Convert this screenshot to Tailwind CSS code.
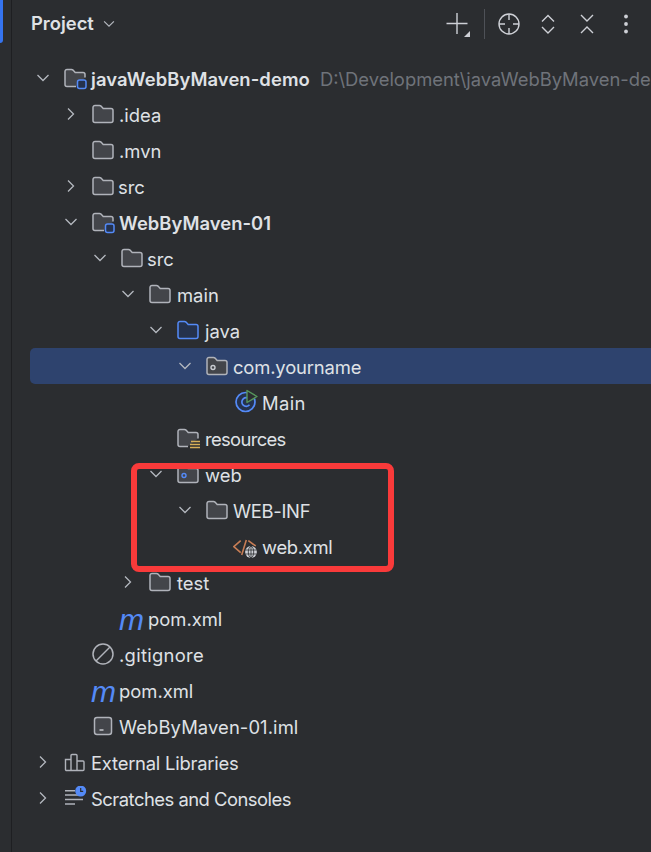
<!DOCTYPE html>
<html lang="en">
<head>
<meta charset="UTF-8">
<title>Project</title>
<script src="https://cdn.jsdelivr.net/npm/@tailwindcss/browser@4"></script>
</head>
<body class="bg-[#2b2d30] font-['Inter','Noto_Sans',sans-serif] text-[18.4px] text-[#dfe1e5] overflow-hidden">

<svg class="hidden">
  <defs>
    <symbol id="chev-down" viewBox="0 0 18 18"><path d="M3.5 6l5.5 5.5L14.500 6" fill="none" stroke="#b4b8bf" stroke-width="1.300"/></symbol>
    <symbol id="chev-right" viewBox="0 0 18 18"><path d="M6 3.500L11.500 9 6 14.500" fill="none" stroke="#b4b8bf" stroke-width="1.300"/></symbol>
    <symbol id="folder" viewBox="0 -1 24 24"><path d="M4 2.500h4.500c.6 0 1.100.2 1.500.6l2.200 2.400H20a2 2 0 0 1 2 2V17.500a2 2 0 0 1-2 2H4a2 2 0 0 1-2-2V4.500a2 2 0 0 1 2-2z" fill="#43454a" stroke="#b0b3ba" stroke-width="1.500"/></symbol>
    <symbol id="folder-blue" viewBox="0 -1 24 24"><path d="M4 2.500h4.500c.6 0 1.100.2 1.500.6l2.200 2.400H20a2 2 0 0 1 2 2V17.500a2 2 0 0 1-2 2H4a2 2 0 0 1-2-2V4.500a2 2 0 0 1 2-2z" fill="#25324d" stroke="#548af7" stroke-width="1.500"/></symbol>
    <symbol id="folder-module" viewBox="0 -1 24 24">
      <path d="M13 19.500H4a2 2 0 0 1-2-2V4.500a2 2 0 0 1 2-2h4.500c.6 0 1.100.2 1.500.6l2.200 2.400H20a2 2 0 0 1 2 2v3" fill="#43454a" stroke="#b0b3ba" stroke-width="1.500"/>
      <rect x="14.500" y="13" width="8.500" height="8.500" rx="2" fill="#25324d" stroke="#548af7" stroke-width="1.500"/>
    </symbol>
    <symbol id="folder-dot" viewBox="0 -1 24 24">
      <path d="M4 2.500h4.500c.6 0 1.100.2 1.500.6l2.200 2.400H20a2 2 0 0 1 2 2V17.500a2 2 0 0 1-2 2H4a2 2 0 0 1-2-2V4.500a2 2 0 0 1 2-2z" fill="#43454a" stroke="#b0b3ba" stroke-width="1.500"/>
      <circle cx="8" cy="12.500" r="2" fill="none" stroke="#c9ccd2" stroke-width="1.400"/>
    </symbol>
    <symbol id="folder-web" viewBox="0 -1 24 24">
      <path d="M4 2.500h4.500c.6 0 1.100.2 1.500.6l2.200 2.400H20a2 2 0 0 1 2 2V17.500a2 2 0 0 1-2 2H4a2 2 0 0 1-2-2V4.500a2 2 0 0 1 2-2z" fill="#43454a" stroke="#b0b3ba" stroke-width="1.500"/>
      <circle cx="8" cy="12.500" r="2" fill="none" stroke="#548af7" stroke-width="1.400"/>
    </symbol>
    <symbol id="folder-res" viewBox="0 -1 24 24">
      <path d="M12 19.500H4a2 2 0 0 1-2-2V4.500a2 2 0 0 1 2-2h4.500c.6 0 1.100.2 1.500.6l2.200 2.400H20a2 2 0 0 1 2 2v4" fill="#43454a" stroke="#b0b3ba" stroke-width="1.500"/>
      <path d="M15 14.500h9M14 17.500h10M14 20.500h10" stroke="#d6ae58" stroke-width="1.500"/>
    </symbol>
    <symbol id="class-run" viewBox="0 0 26 26">
      <circle cx="12.500" cy="13" r="9.500" fill="#25324d" stroke="#548af7" stroke-width="1.700"/>
      <path d="M16.500 10.300A4.300 4.300 0 1 0 16.500 15.700" fill="none" stroke="#548af7" stroke-width="1.700"/>
      <path d="M14 1.500l10 6-10 6z" fill="#2b2d30" stroke="#57965c" stroke-width="1.400" stroke-linejoin="round"/>
    </symbol>
    <symbol id="xml" viewBox="0 0 24 24">
      <path d="M7.700 6.700L.8 12.700l6.900 6M13.300 6L8.700 21M15.300 6.700L22.700 12" fill="none" stroke="#c77d55" stroke-width="1.600"/>
      <circle cx="18" cy="18" r="6.800" fill="#2b2d30"/>
      <circle cx="18" cy="18" r="5.900" fill="#ced0d6"/>
      <path d="M12.300 16h11.400M12.300 20h11.400M18 12.300v11.400" stroke="#2b2d30" stroke-width=".8"/>
      <ellipse cx="18" cy="18" rx="2.700" ry="5.700" fill="none" stroke="#2b2d30" stroke-width=".8"/>
    </symbol>
    <symbol id="ignore" viewBox="0 0 24 24"><circle cx="12" cy="12" r="10" fill="none" stroke="#b0b3ba" stroke-width="1.500"/><path d="M5 19L19 5" stroke="#b0b3ba" stroke-width="1.500"/></symbol>
    <symbol id="iml" viewBox="0 0 24 24"><rect x="3.500" y="3.500" width="17" height="17" rx="2.500" fill="#43454a" stroke="#b0b3ba" stroke-width="1.500"/><path d="M8.500 16h4" stroke="#ced0d6" stroke-width="1.400"/></symbol>
    <symbol id="libs" viewBox="0 0 24 24"><path d="M2.500 9.500h5.500v11H3.500a1 1 0 0 1-1-1zM8 5.500a1 1 0 0 1 1-1h4a1 1 0 0 1 1 1v15H8zM14 11h6a1 1 0 0 1 1 1v7.500a1 1 0 0 1-1 1h-6z" fill="none" stroke="#b0b3ba" stroke-width="1.400"/></symbol>
    <symbol id="scratch" viewBox="0 0 24 24">
      <path d="M2 4.700h10M2 9h13M2 13.500h18M2 18h10" stroke="#b0b3ba" stroke-width="1.500"/>
      <circle cx="17.700" cy="5" r="5.500" fill="#548af7"/>
      <path d="M17.700 2v3.300h2.500" fill="none" stroke="#2b2d30" stroke-width="1.200"/>
    </symbol>
  </defs>
</svg>

<div class="relative flex h-[852px] w-[651px] overflow-hidden">
  <!-- left strip -->
  <div class="w-[12px] shrink-0 border-r border-[#1e1f22]">
    <div class="h-[43px] w-[3px] rounded-br-md bg-[#3574f0]"></div>
  </div>

  <div class="min-w-0 flex-1">
    <!-- header -->
    <div class="flex h-[48px] items-center pl-[19px]">
      <span class="font-semibold">Project</span>
      <svg class="ml-[7px] h-[16px] w-[16px]"><use href="#chev-down"/></svg>
      <div class="ml-auto flex items-center">
        <svg class="h-[26px] w-[26px]" viewBox="0 0 26 26"><path d="M13 2v21M2.500 12.500h21" stroke="#ced0d6" stroke-width="1.400"/><path d="M26 20v6h-6z" fill="#ced0d6"/></svg>
        <div class="ml-[14px] h-[30px] w-px bg-[#4e5157]"></div>
        <svg class="ml-[12px] h-[24px] w-[24px]" viewBox="0 0 24 24"><circle cx="12" cy="12" r="10" fill="none" stroke="#ced0d6" stroke-width="1.400"/><path d="M12 2v6M12 16v6M2 12h6M16 12h6" stroke="#ced0d6" stroke-width="1.400"/></svg>
        <svg class="ml-[15px] h-[24px] w-[24px]" viewBox="0 0 24 24"><path d="M6 9.500l6-6 6 6M6 15l6 6 6-6" fill="none" stroke="#ced0d6" stroke-width="1.400"/></svg>
        <svg class="ml-[15px] h-[24px] w-[24px]" viewBox="0 0 24 24"><path d="M6 3l6 6 6-6M6 21l6-6 6 6" fill="none" stroke="#ced0d6" stroke-width="1.400"/></svg>
        <svg class="ml-[15px] mr-[13px] h-[24px] w-[24px]" viewBox="0 0 24 24"><circle cx="12" cy="4.500" r="1.900" fill="#ced0d6"/><circle cx="12" cy="12" r="1.900" fill="#ced0d6"/><circle cx="12" cy="19.500" r="1.900" fill="#ced0d6"/></svg>
      </div>
    </div>

    <!-- tree -->
    <div class="mt-[12px] whitespace-nowrap [&>div>span]:translate-y-[2px] [&>div>svg]:shrink-0 [&>div>span]:shrink-0">
      <div class="flex h-9 items-center pl-[22px]">
        <svg class="h-[18px] w-[18px]"><use href="#chev-down"/></svg>
        <svg class="ml-[11px] h-6 w-6"><use href="#folder-module"/></svg>
        <span class="ml-[4px] font-semibold tracking-[0.1px]">javaWebByMaven-demo</span>
        <span class="ml-[10px] text-[#6f737a]">D:\Development\javaWebByMaven-demo</span>
      </div>
      <div class="flex h-9 items-center pl-[50px]">
        <svg class="h-[18px] w-[18px]"><use href="#chev-right"/></svg>
        <svg class="ml-[11px] h-6 w-6"><use href="#folder"/></svg>
        <span class="ml-[4px]">.idea</span>
      </div>
      <div class="flex h-9 items-center pl-[78px]">
        <svg class="ml-[1px] h-6 w-6"><use href="#folder"/></svg>
        <span class="ml-[4px]">.mvn</span>
      </div>
      <div class="flex h-9 items-center pl-[50px]">
        <svg class="h-[18px] w-[18px]"><use href="#chev-right"/></svg>
        <svg class="ml-[11px] h-6 w-6"><use href="#folder"/></svg>
        <span class="ml-[3px]">src</span>
      </div>
      <div class="flex h-9 items-center pl-[50px]">
        <svg class="h-[18px] w-[18px]"><use href="#chev-down"/></svg>
        <svg class="ml-[11px] h-6 w-6"><use href="#folder-module"/></svg>
        <span class="ml-[4px] font-semibold tracking-[0.05px]">WebByMaven-01</span>
      </div>
      <div class="flex h-9 items-center pl-[79px]">
        <svg class="h-[18px] w-[18px]"><use href="#chev-down"/></svg>
        <svg class="ml-[11px] h-6 w-6"><use href="#folder"/></svg>
        <span class="ml-[3px]">src</span>
      </div>
      <div class="flex h-9 items-center pl-[107px]">
        <svg class="h-[18px] w-[18px]"><use href="#chev-down"/></svg>
        <svg class="ml-[11px] h-6 w-6"><use href="#folder"/></svg>
        <span class="ml-[5px]">main</span>
      </div>
      <div class="flex h-9 items-center pl-[135px]">
        <svg class="h-[18px] w-[18px]"><use href="#chev-down"/></svg>
        <svg class="ml-[11px] h-6 w-6"><use href="#folder-blue"/></svg>
        <span class="ml-[5px]">java</span>
      </div>
      <div class="ml-[18px] flex h-9 items-center rounded-l-[5px] bg-[#2e436e] pl-[146px]">
        <svg class="h-[18px] w-[18px]"><use href="#chev-down"/></svg>
        <svg class="ml-[11px] h-6 w-6"><use href="#folder-dot"/></svg>
        <span class="ml-[4px] tracking-[-0.15px]">com.yourname</span>
      </div>
      <div class="flex h-9 items-center pl-[221px]">
        <svg class="h-[26px] w-[26px]"><use href="#class-run"/></svg>
        <span class="ml-[3px] tracking-[0.4px]">Main</span>
      </div>
      <div class="flex h-9 items-center pl-[164px]">
        <svg class="h-6 w-6"><use href="#folder-res"/></svg>
        <span class="ml-[5px] tracking-[-0.65px]">resources</span>
      </div>
      <div class="flex h-9 items-center pl-[135px]">
        <svg class="h-[18px] w-[18px]"><use href="#chev-down"/></svg>
        <svg class="ml-[11px] h-6 w-6"><use href="#folder-web"/></svg>
        <span class="ml-[5px]">web</span>
      </div>
      <div class="flex h-9 items-center pl-[164px]">
        <svg class="h-[18px] w-[18px]"><use href="#chev-down"/></svg>
        <svg class="ml-[11px] h-6 w-6"><use href="#folder"/></svg>
        <span class="ml-[4px] tracking-[-0.3px]">WEB-INF</span>
      </div>
      <div class="flex h-9 items-center pl-[221px]">
        <svg class="h-6 w-6"><use href="#xml"/></svg>
        <span class="ml-[5px] tracking-[-0.3px]">web.xml</span>
      </div>
      <div class="flex h-9 items-center pl-[107px]">
        <svg class="h-[18px] w-[18px]"><use href="#chev-right"/></svg>
        <svg class="ml-[11px] h-6 w-6"><use href="#folder"/></svg>
        <span class="ml-[5px]">test</span>
      </div>
      <div class="flex h-9 items-center pl-[107px]">
        <span class="w-[29px] font-['Liberation_Sans',sans-serif] text-[30px] leading-none text-[#548af7] italic">m</span>
        <span>pom.xml</span>
      </div>
      <div class="flex h-9 items-center pl-[79px]">
        <svg class="h-6 w-6"><use href="#ignore"/></svg>
        <span class="ml-[4px] tracking-[0.3px]">.gitignore</span>
      </div>
      <div class="flex h-9 items-center pl-[79px]">
        <span class="w-[28px] font-['Liberation_Sans',sans-serif] text-[30px] leading-none text-[#548af7] italic">m</span>
        <span>pom.xml</span>
      </div>
      <div class="flex h-9 items-center pl-[79px]">
        <svg class="h-6 w-6"><use href="#iml"/></svg>
        <span class="ml-[4px] tracking-[0.1px]">WebByMaven-01.iml</span>
      </div>
      <div class="flex h-9 items-center pl-[22px]">
        <svg class="h-[18px] w-[18px]"><use href="#chev-right"/></svg>
        <svg class="ml-[11px] h-6 w-6"><use href="#libs"/></svg>
        <span class="ml-[4px] tracking-[-0.22px]">External Libraries</span>
      </div>
      <div class="flex h-9 items-center pl-[22px]">
        <svg class="h-[18px] w-[18px]"><use href="#chev-right"/></svg>
        <svg class="ml-[11px] h-6 w-6"><use href="#scratch"/></svg>
        <span class="ml-[4px] tracking-[-0.5px]">Scratches and Consoles</span>
      </div>
    </div>
  </div>

  <!-- red annotation box -->
  <div class="absolute top-[463px] left-[131px] h-[109px] w-[263px] rounded-[8px] border-[6px] border-[#f93a3a]"></div>
</div>
</body>
</html>
